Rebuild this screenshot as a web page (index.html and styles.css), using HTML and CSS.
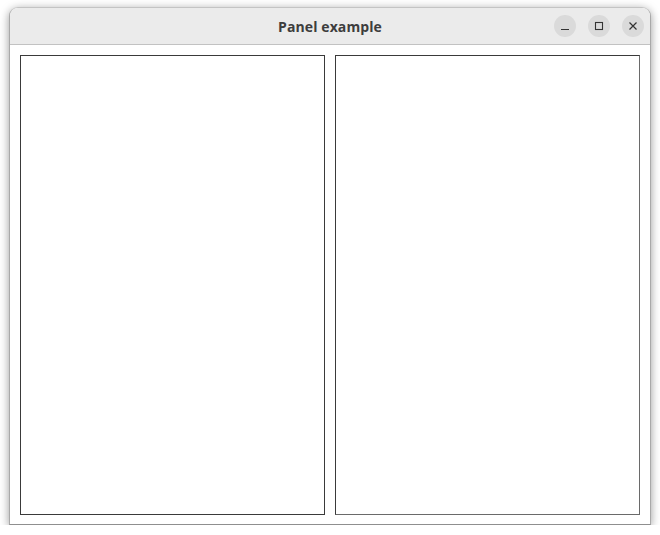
FILE: index.html
```html
<!DOCTYPE html>
<html>
<head>
<meta charset="utf-8">
<link rel="stylesheet" href="styles.css">
</head>
<body>
<div class="window">
  <div class="titlebar">
    <div class="spacer"></div>
    <div class="title">Panel example</div>
    <div class="controls">
      <div class="btn">
        <svg width="10" height="10" viewBox="0 0 10 10"><path d="M1 8.5h8" stroke="#333" stroke-width="1.2" fill="none"/></svg>
      </div>
      <div class="btn">
        <svg width="10" height="10" viewBox="0 0 10 10"><rect x="1.5" y="1.5" width="7" height="7" stroke="#333" stroke-width="1.1" fill="none"/></svg>
      </div>
      <div class="btn">
        <svg width="10" height="10" viewBox="0 0 10 10"><path d="M1.5 1.5l7 7M8.5 1.5l-7 7" stroke="#333" stroke-width="1.2" fill="none"/></svg>
      </div>
    </div>
  </div>
  <div class="content">
    <div class="panel"></div>
    <div class="panel panel-right"></div>
  </div>
</div>
</body>
</html>
```

FILE: styles.css
```css
html, body {
  margin: 0;
  padding: 0;
  background: #ffffff;
}
body {
  padding: 7px 0 0 9px;
  font-family: "Open Sans", "DejaVu Sans", sans-serif;
}
.window {
  box-sizing: border-box;
  width: 642px;
  height: 518px;
  border: 1px solid #a9a9a9;
  border-top-color: #c4c4c4;
  border-bottom-color: #8f8f8f;
  border-radius: 9px 9px 0 0;
  background: #ffffff;
  box-shadow: 0 2px 10px rgba(0, 0, 0, 0.4);
  display: flex;
  flex-direction: column;
  overflow: hidden;
}
.titlebar {
  height: 36px;
  flex: none;
  background: #ebebeb;
  border-bottom: 1px solid #c2c2c2;
  display: grid;
  grid-template-columns: 1fr auto 1fr;
  align-items: center;
}
.title {
  font-weight: bold;
  font-size: 14px;
  color: #3d3d3d;
  letter-spacing: 0.1px;
  padding-top: 1px;
}
.controls {
  display: flex;
  justify-content: flex-end;
  gap: 12px;
  padding-right: 6px;
}
.btn {
  width: 22px;
  height: 22px;
  border-radius: 50%;
  background: #dadada;
  display: flex;
  align-items: center;
  justify-content: center;
}
.btn svg {
  display: block;
}
.content {
  flex: 1;
  display: flex;
  gap: 10px;
  padding: 10px 10px 9px 10px;
}
.panel {
  flex: 1;
  border: 1px solid #3a3a3a;
}
.panel-right {
  border-right-color: #6a6a6a;
  border-bottom-color: #6a6a6a;
}
```
